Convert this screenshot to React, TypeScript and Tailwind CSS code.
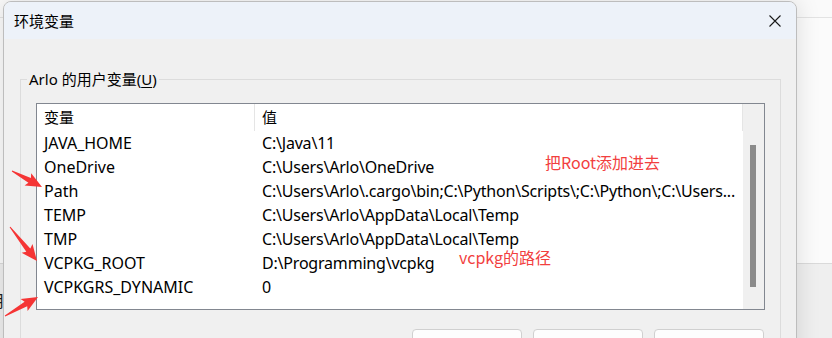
import React from "react";

const FONT = { fontFamily: '"Noto Sans", "Noto Sans CJK SC", sans-serif' };
const CJK = { fontFamily: '"Noto Sans CJK SC", "Noto Sans", sans-serif' };

function arrowPoints(x1: number, y1: number, x2: number, y2: number, headLen = 14, headW = 7, neckW = 2.6) {
  const dx = x2 - x1;
  const dy = y2 - y1;
  const len = Math.hypot(dx, dy);
  const ux = dx / len;
  const uy = dy / len;
  const nx = -uy;
  const ny = ux;
  const bx = x2 - ux * headLen;
  const by = y2 - uy * headLen;
  const pts: [number, number][] = [
    [x1 + nx * 0.5, y1 + ny * 0.5],
    [bx + nx * neckW, by + ny * neckW],
    [bx - ux * 2 + nx * headW, by - uy * 2 + ny * headW],
    [x2, y2],
    [bx - ux * 2 - nx * headW, by - uy * 2 - ny * headW],
    [bx - nx * neckW, by - ny * neckW],
    [x1 - nx * 0.5, y1 - ny * 0.5],
  ];
  return pts.map((p) => `${p[0].toFixed(1)},${p[1].toFixed(1)}`).join(" ");
}

const rows: [string, string][] = [
  ["JAVA_HOME", "C:\\Java\\11"],
  ["OneDrive", "C:\\Users\\Arlo\\OneDrive"],
  ["Path", "C:\\Users\\Arlo\\.cargo\\bin;C:\\Python\\Scripts\\;C:\\Python\\;C:\\Users..."],
  ["TEMP", "C:\\Users\\Arlo\\AppData\\Local\\Temp"],
  ["TMP", "C:\\Users\\Arlo\\AppData\\Local\\Temp"],
  ["VCPKG_ROOT", "D:\\Programming\\vcpkg"],
  ["VCPKGRS_DYNAMIC", "0"],
];

export default function App() {
  return (
    <div className="relative w-[832px] h-[338px] overflow-hidden bg-white" style={FONT}>
      {/* background window */}
      <div className="flex flex-col w-full h-full">
        <div className="h-[18px] bg-[#fafafa] border-b border-[#e3e3e3]" />
        <div className="flex-1 bg-[#fbfbfb]" />
        <div className="h-[75px] bg-[#efefef] border-t border-[#dadada] flex items-start pt-[26px]">
          <span className="-ml-[12px] text-[16px] leading-[20px] text-[#222]" style={CJK}>用</span>
        </div>
      </div>

      {/* dialog window */}
      <div className="absolute left-[3px] top-[1px] w-[794px] h-[420px] flex flex-col border border-[#bdbdbd] rounded-t-[8px] bg-[#f0f0f0] overflow-hidden shadow-[0_0_24px_rgba(0,0,0,0.13)]">
        <div className="h-[37px] shrink-0 bg-[#edf2f9] flex items-center justify-between pl-[10px] pr-[15px]">
          <span className="text-[15px] text-black leading-none" style={CJK}>环境变量</span>
          <svg width="12" height="12" viewBox="0 0 12 12">
            <path d="M0.5 0.5 L11.5 11.5 M11.5 0.5 L0.5 11.5" stroke="#1a1a1a" strokeWidth="1.1" fill="none" />
          </svg>
        </div>

        <div className="flex flex-col pt-[40px] pl-[16px] pr-[15px]">
          <div className="relative border border-[#dcdcdc] pt-[23px] px-[15px] h-[300px]">
            <div className="absolute -top-[11px] left-[6px] bg-[#f0f0f0] px-[2px] text-[15px] leading-[20px] text-black">
              Arlo <span style={CJK}>的用户变量</span>(<span className="underline underline-offset-2">U</span>)
            </div>

            <div className="h-[207px] border border-[#828790] bg-white flex">
              <div className="flex-1 min-w-0 flex flex-col">
                <div className="h-[27px] flex text-[15px] text-black">
                  <div className="w-[218px] shrink-0 border-r border-[#e5e5e5] pl-[7px] flex items-center" style={CJK}>变量</div>
                  <div className="flex-1 min-w-0 border-r border-[#e5e5e5] pl-[7px] flex items-center" style={CJK}>值</div>
                </div>
                {rows.map(([k, v]) => (
                  <div key={k} className="h-[24px] flex items-center text-[16px] text-black">
                    <div className="w-[218px] shrink-0 pl-[7px] whitespace-nowrap">{k}</div>
                    <div className="flex-1 min-w-0 pl-[7px] whitespace-nowrap overflow-hidden tracking-[-0.2px]">{v}</div>
                  </div>
                ))}
              </div>
              <div className="w-[21px] shrink-0 bg-[#f0f0f0] flex flex-col">
                <div className="mt-[41px] ml-[7px] w-[6px] h-[142px] bg-[#8b8b8b]" />
              </div>
            </div>

            <div className="mt-[19px] flex justify-end gap-[11px] pr-[1px]">
              {["新建(N)...", "编辑(E)...", "删除(D)"].map((t) => (
                <div key={t} className="w-[110px] h-[36px] shrink-0 rounded-[4px] border border-[#d0d0d0] bg-[#fdfdfd] flex items-center justify-center text-[15px] text-black" style={CJK}>
                  {t}
                </div>
              ))}
            </div>
          </div>
        </div>
      </div>

      {/* annotations */}
      <div className="absolute left-[545px] top-[151px] text-[16px] leading-[22px] text-[#f23f3f] whitespace-nowrap" style={CJK}>把Root添加进去</div>
      <div className="absolute left-[459px] top-[246px] text-[16px] leading-[22px] text-[#f23f3f] whitespace-nowrap" style={CJK}>vcpkg的路径</div>

      <svg className="absolute left-0 top-0 pointer-events-none" width="832" height="338">
        <polygon points={arrowPoints(12, 171, 42, 187)} fill="#f53535" />
        <polygon points={arrowPoints(10, 227, 37, 261)} fill="#f53535" />
        <polygon points={arrowPoints(5, 316, 38, 297)} fill="#f53535" />
      </svg>
    </div>
  );
}
